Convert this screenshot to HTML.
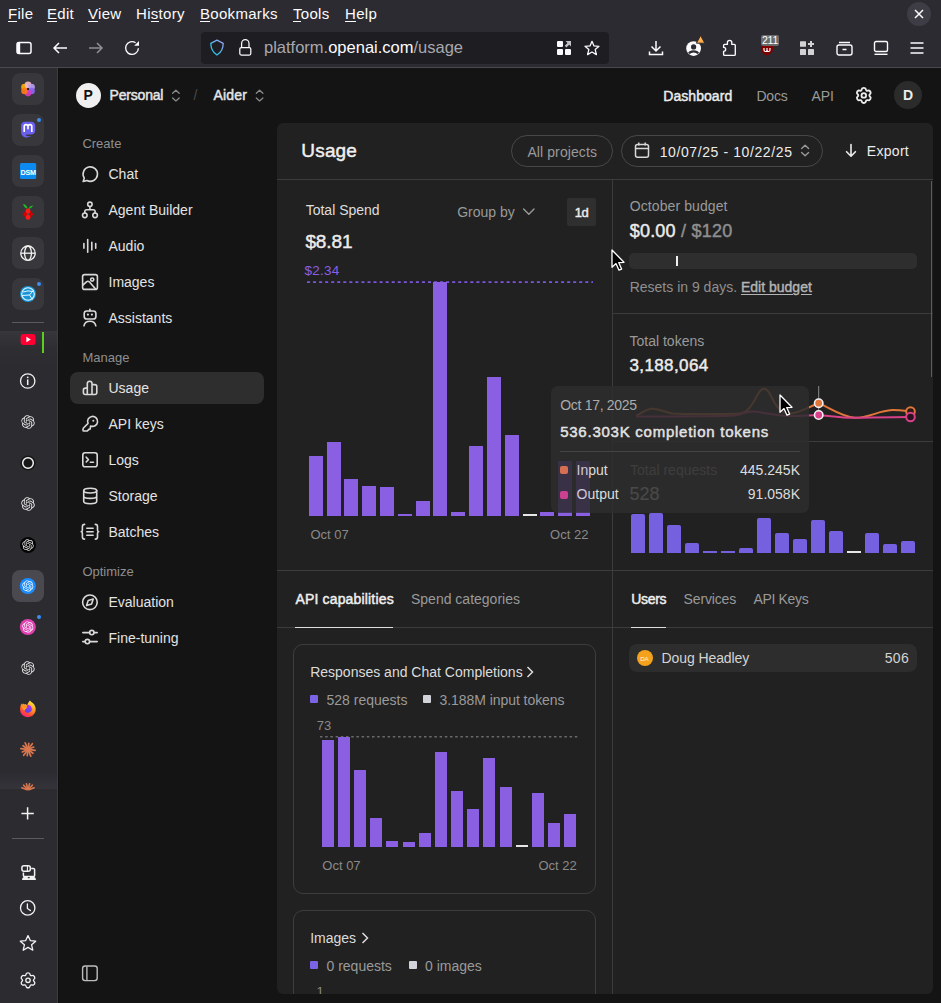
<!DOCTYPE html>
<html><head><meta charset="utf-8">
<style>
*{box-sizing:border-box;margin:0;padding:0}
html,body{width:941px;height:1003px;overflow:hidden;background:#141414;font-family:"Liberation Sans",sans-serif;}
.a{position:absolute;white-space:nowrap}
svg{position:absolute;overflow:visible}
#chrome{position:absolute;left:0;top:0;width:941px;height:68px;background:#2c2b31;}
#menubar span{position:absolute;top:5px;font-size:15px;color:#fbfbfe;letter-spacing:0.3px}
#menubar u{text-decoration:none;box-shadow:inset 0 -1px 0 #fbfbfe;padding-bottom:0px}
#urlbar{position:absolute;left:201px;top:32px;width:408px;height:32px;background:#1e1d22;border-radius:4px}
</style></head><body>
<!-- ============ BROWSER CHROME ============ -->
<div id="chrome">
 <div id="menubar">
  <span style="left:8px"><u>F</u>ile</span>
  <span style="left:47px"><u>E</u>dit</span>
  <span style="left:88px"><u>V</u>iew</span>
  <span style="left:136px">Hi<u>s</u>tory</span>
  <span style="left:200px"><u>B</u>ookmarks</span>
  <span style="left:293px"><u>T</u>ools</span>
  <span style="left:345px"><u>H</u>elp</span>
 </div>
 <div class="a" style="left:907px;top:2px;width:24px;height:24px;border-radius:12px;background:#3e3d45"></div>
 <svg style="left:914px;top:9px" width="10" height="10" viewBox="0 0 10 10"><path d="M1 1L9 9M9 1L1 9" stroke="#fbfbfe" stroke-width="1.5"/></svg>
 <!-- nav icons -->
 <svg style="left:16px;top:40px" width="16" height="16" viewBox="0 0 16 16"><rect x="1" y="2.5" width="14" height="11" rx="2" fill="none" stroke="#fbfbfe" stroke-width="1.5"/><rect x="1" y="2.5" width="3.2" height="11" fill="#fbfbfe"/></svg>
 <svg style="left:52px;top:40px" width="16" height="16" viewBox="0 0 16 16"><path d="M15 8H2M7 3L2 8L7 13" fill="none" stroke="#fbfbfe" stroke-width="1.5"/></svg>
 <svg style="left:88px;top:40px" width="16" height="16" viewBox="0 0 16 16"><path d="M1 8H14M9 3L14 8L9 13" fill="none" stroke="#8f8f94" stroke-width="1.5"/></svg>
 <svg style="left:124px;top:40px" width="16" height="16" viewBox="0 0 16 16"><path d="M14.4 8.2A6.4 6.4 0 1 1 11.6 2.7" fill="none" stroke="#fbfbfe" stroke-width="1.35"/><path d="M15 1V5.8H10.2Z" fill="#fbfbfe"/></svg>
 <div id="urlbar"></div>
 <svg style="left:209px;top:39px" width="16" height="17" viewBox="0 0 16 17"><defs><linearGradient id="sg" x1="1" y1="0" x2="0.2" y2="0.8"><stop offset="0" stop-color="#a99cf5"/><stop offset="0.55" stop-color="#5fb6f0"/><stop offset="1" stop-color="#2ac3ee"/></linearGradient></defs><path d="M8 1.2L14.2 4.3C14.2 9.8 12 13.6 8 16C4 13.6 1.8 9.8 1.8 4.3Z" fill="none" stroke="url(#sg)" stroke-width="1.3" stroke-linejoin="round"/></svg>
 <svg style="left:237px;top:39px" width="16" height="17" viewBox="0 0 16 17"><rect x="2.8" y="8.6" width="11" height="7.4" rx="1.5" fill="none" stroke="#fbfbfe" stroke-width="1.25"/><path d="M4.6 8.6V4.4A3.7 3.7 0 0 1 12 4.4V8.6" fill="none" stroke="#fbfbfe" stroke-width="1.25"/></svg>
 <div class="a" style="left:264px;top:38px;font-size:16.5px;color:#a8a8ad">platform.<span style="color:#fbfbfe">openai.com</span>/usage</div>
 <svg style="left:556px;top:40px" width="16" height="16" viewBox="0 0 16 16"><rect x="1" y="1" width="6" height="6" rx="1" fill="#fbfbfe"/><rect x="1" y="9" width="6" height="6" rx="1" fill="#fbfbfe"/><rect x="9" y="9" width="6" height="6" rx="1" fill="#fbfbfe"/><path d="M15 1V6.4L9.6 1Z" fill="#c4c4c6"/><path d="M9.6 6.6L12.6 3.6" stroke="#c4c4c6" stroke-width="2.2"/></svg>
 <svg style="left:584px;top:40px" width="16" height="16" viewBox="0 0 16 16"><path d="M8 1.3L10 5.9L15 6.3L11.2 9.6L12.4 14.6L8 12L3.6 14.6L4.8 9.6L1 6.3L6 5.9Z" fill="none" stroke="#fbfbfe" stroke-width="1.3" stroke-linejoin="round"/></svg>
 <svg style="left:648px;top:40px" width="16" height="16" viewBox="0 0 16 16"><path d="M8 1V11M3.5 6.5L8 11L12.5 6.5M1.5 11.5V14.5H14.5V11.5" fill="none" stroke="#fbfbfe" stroke-width="1.5"/></svg>
 <svg style="left:685px;top:40px" width="18" height="16" viewBox="0 0 18 16"><circle cx="8.6" cy="8.6" r="7.4" fill="#fbfbfe"/><circle cx="8.6" cy="6.9" r="2.6" fill="#2c2b31"/><path d="M4 13.4C5.5 10.6 11.7 10.6 13.2 13.4" fill="none" stroke="#2c2b31" stroke-width="2.2"/><path d="M15.6 -4.6L19.8 3.2H11.4Z" fill="#ffb04a" stroke="#2c2b31" stroke-width="1"/></svg>
 <svg style="left:721px;top:40px" width="16" height="16" viewBox="0 0 16 16"><path d="M2.6 5.4Q2.6 4.4 3.6 4.4H6.4V2.5A2.2 2.2 0 0 1 10.8 2.5V4.4H13.3Q14.3 4.4 14.3 5.4V14.4Q14.3 15.4 13.3 15.4H3.6Q2.6 15.4 2.6 14.4V11.3A2.1 1.95 0 0 0 2.6 7.4Z" fill="none" stroke="#fbfbfe" stroke-width="1.35" stroke-linejoin="round"/></svg>
 <svg style="left:759px;top:40px" width="16" height="16" viewBox="0 0 16 16"><path d="M8 1L14 3V9C14 12 11 14.5 8 15.5C5 14.5 2 12 2 9V3Z" fill="#800000"/><path d="M5 8V10A1.5 1.5 0 0 0 8 10V8M8 10A1.5 1.5 0 0 0 11 10V8" fill="none" stroke="#fff" stroke-width="1.2"/></svg>
 <div class="a" style="left:761px;top:35px;width:18px;height:11px;background:#6b6b6b;border-radius:2px;font-size:10.5px;line-height:11px;color:#fff;text-align:center;letter-spacing:-0.3px">211</div>
 <svg style="left:799px;top:40px" width="16" height="16" viewBox="0 0 16 16"><rect x="1" y="1.2" width="6" height="5.6" rx="0.6" fill="#d2d2d4"/><rect x="1" y="9" width="6" height="6" rx="0.6" fill="#d2d2d4"/><rect x="9" y="9" width="6" height="6" rx="0.6" fill="#d2d2d4"/><path d="M12 1V7M9 4H15" stroke="#d2d2d4" stroke-width="2"/></svg>
 <svg style="left:836px;top:40px" width="17" height="16" viewBox="0 0 17 16"><rect x="1" y="5" width="15" height="10" rx="2" fill="none" stroke="#fbfbfe" stroke-width="1.4"/><path d="M3 2.5H14M6.5 9.5H10.5" stroke="#fbfbfe" stroke-width="1.4"/></svg>
 <svg style="left:873px;top:40px" width="16" height="16" viewBox="0 0 16 16"><rect x="1.5" y="1.5" width="13" height="10" rx="1.5" fill="none" stroke="#fbfbfe" stroke-width="1.4"/><path d="M1.5 14.3H14.5" stroke="#fbfbfe" stroke-width="1.4"/></svg>
 <svg style="left:909px;top:40px" width="16" height="16" viewBox="0 0 16 16"><path d="M1.5 3H14.5M1.5 8H14.5M1.5 13H14.5" stroke="#fbfbfe" stroke-width="1.4"/></svg>
 <div class="a" style="left:0;top:67px;width:941px;height:1px;background:#4a4950"></div>
</div>
<!-- SIDEBAR_PLACEHOLDER -->

<div class="a" style="left:0px;top:68px;width:57px;height:935px;background:#2c2b30;"></div>
<div class="a" style="left:57px;top:68px;width:1px;height:935px;background:#3d3c41;"></div>
<div class="a" style="left:58px;top:68px;width:1px;height:935px;background:#0f0f0f;"></div>
<div class="a" style="left:12px;top:73px;width:32px;height:32px;background:#38373c;border-radius:8px;"></div>
<div class="a" style="left:12px;top:114px;width:32px;height:32px;background:#38373c;border-radius:8px;"></div>
<div class="a" style="left:12px;top:155px;width:32px;height:32px;background:#38373c;border-radius:8px;"></div>
<div class="a" style="left:12px;top:196px;width:32px;height:32px;background:#38373c;border-radius:8px;"></div>
<div class="a" style="left:12px;top:237px;width:32px;height:32px;background:#38373c;border-radius:8px;"></div>
<div class="a" style="left:12px;top:278px;width:32px;height:32px;background:#38373c;border-radius:8px;"></div>
<div class="a" style="left:12px;top:322px;width:32px;height:1px;background:#5b5a61;"></div>
<div class="a" style="left:0px;top:331px;width:57px;height:458px;background:#2c2b30;background:linear-gradient(#37363b,#2e2d32 18px,#2c2b30 40px,#2c2b30 440px,#35343a 458px);"></div>
<div class="a" style="left:12px;top:570px;width:32px;height:32px;background:#4a4950;border-radius:8px;"></div>
<div class="a" style="left:12px;top:838px;width:32px;height:1px;background:#5b5a61;"></div>
<div class="a" style="left:76px;top:83px;width:25px;height:25px;border-radius:13px;background:#f0f0f0"></div>
<div class="a" style="left:83.5px;top:88.4px;font-size:14px;line-height:14px;color:#111;font-weight:700;">P</div>
<div class="a" style="left:109.6px;top:88.3px;font-size:14px;line-height:14px;color:#e6e6e6;font-weight:400;letter-spacing:-0.2px;-webkit-text-stroke:0.45px #e6e6e6;">Personal</div>
<div class="a" style="left:193.5px;top:88.3px;font-size:14px;line-height:14px;color:#4a4a4a;font-weight:400;">/</div>
<div class="a" style="left:213.6px;top:88.3px;font-size:14px;line-height:14px;color:#e6e6e6;font-weight:400;letter-spacing:0.14px;-webkit-text-stroke:0.45px #e6e6e6;">Aider</div>
<div class="a" style="left:663.3px;top:88.5px;font-size:14px;line-height:14px;color:#ececec;font-weight:400;letter-spacing:0.05px;-webkit-text-stroke:0.45px #ececec;">Dashboard</div>
<div class="a" style="left:756.4px;top:88.5px;font-size:14px;line-height:14px;color:#9a9a9a;font-weight:400;letter-spacing:-0.2px;">Docs</div>
<div class="a" style="left:811.4px;top:88.5px;font-size:14px;line-height:14px;color:#9a9a9a;font-weight:400;">API</div>
<div class="a" style="left:894px;top:81px;width:28px;height:28px;border-radius:14px;background:#2b2b2b"></div>
<div class="a" style="left:903.0px;top:88.4px;font-size:14px;line-height:14px;color:#ececec;font-weight:700;">D</div>
<div class="a" style="left:82.4px;top:136.9px;font-size:13px;line-height:13px;color:#8f8f8f;font-weight:400;">Create</div>
<div class="a" style="left:82.4px;top:351.3px;font-size:13px;line-height:13px;color:#8f8f8f;font-weight:400;">Manage</div>
<div class="a" style="left:82.4px;top:564.6px;font-size:13px;line-height:13px;color:#8f8f8f;font-weight:400;">Optimize</div>
<div class="a" style="left:70px;top:372px;width:194px;height:32px;background:#2e2e2e;border-radius:8px;"></div>
<div class="a" style="left:108.5px;top:167.2px;font-size:14px;line-height:14px;color:#e3e3e3;font-weight:400;">Chat</div>
<div class="a" style="left:108.5px;top:203.3px;font-size:14px;line-height:14px;color:#e3e3e3;font-weight:400;">Agent Builder</div>
<div class="a" style="left:108.5px;top:239.3px;font-size:14px;line-height:14px;color:#e3e3e3;font-weight:400;">Audio</div>
<div class="a" style="left:108.5px;top:275.3px;font-size:14px;line-height:14px;color:#e3e3e3;font-weight:400;">Images</div>
<div class="a" style="left:108.5px;top:311.3px;font-size:14px;line-height:14px;color:#e3e3e3;font-weight:400;">Assistants</div>
<div class="a" style="left:108.5px;top:381.2px;font-size:14px;line-height:14px;color:#e3e3e3;font-weight:400;">Usage</div>
<div class="a" style="left:108.5px;top:417.3px;font-size:14px;line-height:14px;color:#e3e3e3;font-weight:400;">API keys</div>
<div class="a" style="left:108.5px;top:453.3px;font-size:14px;line-height:14px;color:#e3e3e3;font-weight:400;">Logs</div>
<div class="a" style="left:108.5px;top:489.3px;font-size:14px;line-height:14px;color:#e3e3e3;font-weight:400;">Storage</div>
<div class="a" style="left:108.5px;top:525.3px;font-size:14px;line-height:14px;color:#e3e3e3;font-weight:400;">Batches</div>
<div class="a" style="left:108.5px;top:595.4px;font-size:14px;line-height:14px;color:#e3e3e3;font-weight:400;">Evaluation</div>
<div class="a" style="left:108.5px;top:631.4px;font-size:14px;line-height:14px;color:#e3e3e3;font-weight:400;">Fine-tuning</div>
<div class="a" style="left:277px;top:123px;width:656px;height:871px;background:#212121;border-radius:6px;"></div>
<div class="a" style="left:301.3px;top:141.4px;font-size:19px;line-height:19px;color:#f0f0f0;font-weight:400;letter-spacing:0.18px;-webkit-text-stroke:0.45px #f0f0f0;">Usage</div>
<div class="a" style="left:277px;top:179px;width:656px;height:1px;background:#3c3c3c;"></div>
<div class="a" style="left:612px;top:180px;width:1px;height:814px;background:#3c3c3c;"></div>
<div class="a" style="left:511px;top:135px;width:102px;height:32px;border-radius:16px;border:1px solid #474747"></div>
<div class="a" style="left:527.4px;top:144.7px;font-size:14px;line-height:14px;color:#9a9a9a;font-weight:400;letter-spacing:0.1px;">All projects</div>
<div class="a" style="left:621px;top:135px;width:202px;height:32px;border-radius:16px;border:1px solid #474747"></div>
<div class="a" style="left:659.7px;top:144.7px;font-size:14px;line-height:14px;color:#ececec;font-weight:400;letter-spacing:0.6px;">10/07/25 - 10/22/25</div>
<div class="a" style="left:866.8px;top:144.3px;font-size:14px;line-height:14px;color:#ececec;font-weight:400;letter-spacing:0.3px;">Export</div>
<div class="a" style="left:305.7px;top:203.0px;font-size:14px;line-height:14px;color:#dedede;font-weight:400;">Total Spend</div>
<div class="a" style="left:305.4px;top:232.1px;font-size:19px;line-height:19px;color:#ececec;font-weight:400;letter-spacing:-0.1px;-webkit-text-stroke:0.45px #ececec;">$8.81</div>
<div class="a" style="left:304.5px;top:263.5px;font-size:13.5px;line-height:13.5px;color:#8a5fe8;font-weight:400;letter-spacing:0.25px;">$2.34</div>
<div class="a" style="left:457.2px;top:205.2px;font-size:14px;line-height:14px;color:#9a9a9a;font-weight:400;">Group by</div>
<div class="a" style="left:567px;top:198px;width:29px;height:28px;background:#2f2f2f;border-radius:2px;"></div>
<div class="a" style="left:574.8px;top:206.1px;font-size:13px;line-height:13px;color:#ececec;font-weight:400;letter-spacing:-0.6px;-webkit-text-stroke:0.45px #ececec;">1d</div>
<svg style="left:0;top:0" width="941" height="1003"><line x1="307" y1="282.1" x2="593" y2="282.1" stroke="#7c55dd" stroke-width="1.6" stroke-dasharray="3 3.05"/></svg>
<div class="a" style="left:309px;top:456px;width:14px;height:60px;background:#8a5fe2"></div>
<div class="a" style="left:327px;top:442px;width:14px;height:74px;background:#8a5fe2"></div>
<div class="a" style="left:344px;top:479px;width:14px;height:37px;background:#8a5fe2"></div>
<div class="a" style="left:362px;top:486px;width:14px;height:30px;background:#8a5fe2"></div>
<div class="a" style="left:380px;top:487px;width:14px;height:29px;background:#8a5fe2"></div>
<div class="a" style="left:398px;top:514px;width:14px;height:2px;background:#8a5fe2"></div>
<div class="a" style="left:416px;top:501px;width:14px;height:15px;background:#8a5fe2"></div>
<div class="a" style="left:433px;top:282px;width:14px;height:234px;background:#8a5fe2"></div>
<div class="a" style="left:451px;top:512px;width:14px;height:4px;background:#8a5fe2"></div>
<div class="a" style="left:469px;top:446px;width:14px;height:70px;background:#8a5fe2"></div>
<div class="a" style="left:487px;top:377px;width:14px;height:139px;background:#8a5fe2"></div>
<div class="a" style="left:505px;top:435px;width:14px;height:81px;background:#8a5fe2"></div>
<div class="a" style="left:523px;top:514px;width:14px;height:2px;background:#e6e6e6"></div>
<div class="a" style="left:540px;top:512px;width:14px;height:4px;background:#8a5fe2"></div>
<div class="a" style="left:558px;top:512px;width:14px;height:4px;background:#8a5fe2"></div>
<div class="a" style="left:576px;top:512px;width:14px;height:4px;background:#8a5fe2"></div>
<div class="a" style="left:310.4px;top:527.9px;font-size:13px;line-height:13px;color:#8a8a8a;font-weight:400;">Oct 07</div>
<div class="a" style="right:352.6px;top:527.7px;font-size:13px;line-height:13px;color:#8a8a8a;font-weight:400;">Oct 22</div>
<div class="a" style="left:277px;top:570px;width:335px;height:1px;background:#3c3c3c;"></div>
<div class="a" style="left:629.7px;top:198.9px;font-size:14px;line-height:14px;color:#9a9a9a;font-weight:400;letter-spacing:0.1px;">October budget</div>
<div class="a" style="left:629.7px;top:221.8px;font-size:18px;line-height:18px;color:#ececec;font-weight:400;letter-spacing:0.22px;-webkit-text-stroke:0.45px #ececec;">$0.00<span style="color:#8f8f8f;-webkit-text-stroke-color:#8f8f8f"> / $120</span></div>
<div class="a" style="left:629px;top:253px;width:288px;height:16px;background:#2e2e2e;border-radius:5px;"></div>
<div class="a" style="left:676px;top:256px;width:2.2px;height:9.5px;background:#f0f0f0;"></div>
<div class="a" style="left:629.7px;top:280.2px;font-size:14px;line-height:14px;color:#8f8f8f;font-weight:400;">Resets in 9 days. <span style="color:#b5b5b5;-webkit-text-stroke:0.4px #b5b5b5;text-decoration:underline;text-underline-offset:2px">Edit budget</span></div>
<div class="a" style="left:613px;top:313px;width:320px;height:1px;background:#3c3c3c;"></div>
<div class="a" style="left:629.5px;top:333.8px;font-size:14px;line-height:14px;color:#9a9a9a;font-weight:400;">Total tokens</div>
<div class="a" style="left:629.5px;top:356.6px;font-size:17px;line-height:17px;color:#ececec;font-weight:400;letter-spacing:0.38px;-webkit-text-stroke:0.45px #ececec;">3,188,064</div>
<svg style="left:0;top:0" width="941" height="1003">
<path d="M636 415.8 C642 413 646 409 652 408.8 C658 408.6 664 412 672 413.5 C690 414.5 715 414 738 413.8 C748 413.5 752 405 758 394 C762 387 766 387 770 394 C775 405 780 413 790 413.5 C800 413 810 406 818.7 403.2 C830 408 842 417 855 417.8 C868 418 878 411 892 410.1 C900 410 906 411 911 411.5" fill="none" stroke="#e0763a" stroke-width="2"/>
<path d="M636 416.4 C680 416.5 715 416.5 735 415.5 C742 414.5 746 411.5 752 411.5 C760 411.5 770 415 790 416 C800 416 810 415.2 818.7 415 C830 416 842 417.8 855 417.8 C870 417.6 890 417 911 417" fill="none" stroke="#d8408a" stroke-width="2"/>
<line x1="818.7" y1="386" x2="818.7" y2="415" stroke="#8a8a8a" stroke-width="1"/>
<circle cx="818.7" cy="403.2" r="4.2" fill="#e0763a" stroke="#f2f2f2" stroke-width="1.6"/>
<circle cx="818.7" cy="415" r="4.2" fill="#d8408a" stroke="#f2f2f2" stroke-width="1.6"/>
<circle cx="910.5" cy="411.5" r="4.3" fill="#2a1a14" stroke="#e0763a" stroke-width="2"/>
<circle cx="910.5" cy="417" r="4.3" fill="#2a1320" stroke="#d8408a" stroke-width="2"/>
</svg>
<div class="a" style="left:613px;top:441px;width:320px;height:1px;background:#3c3c3c;"></div>
<div class="a" style="left:630.0px;top:462.6px;font-size:14px;line-height:14px;color:#9a9a9a;font-weight:400;">Total requests</div>
<div class="a" style="left:629.6px;top:484.8px;font-size:18px;line-height:18px;color:#ececec;font-weight:400;">528</div>
<div class="a" style="left:631px;top:513.8px;width:14px;height:38.8px;background:#7560e0;border-radius:2px 2px 0 0;"></div>
<div class="a" style="left:649px;top:512.7px;width:14px;height:39.9px;background:#7560e0;border-radius:2px 2px 0 0;"></div>
<div class="a" style="left:667px;top:524.9px;width:14px;height:27.7px;background:#7560e0;border-radius:2px 2px 0 0;"></div>
<div class="a" style="left:685px;top:542.5px;width:14px;height:10.1px;background:#7560e0;border-radius:2px 2px 0 0;"></div>
<div class="a" style="left:703px;top:550.8px;width:14px;height:1.8px;background:#7560e0;"></div>
<div class="a" style="left:721px;top:550.8px;width:14px;height:1.8px;background:#7560e0;"></div>
<div class="a" style="left:739px;top:548.0px;width:14px;height:4.6px;background:#7560e0;border-radius:2px 2px 0 0;"></div>
<div class="a" style="left:757px;top:518.0px;width:14px;height:34.6px;background:#7560e0;border-radius:2px 2px 0 0;"></div>
<div class="a" style="left:775px;top:532.8px;width:14px;height:19.8px;background:#7560e0;border-radius:2px 2px 0 0;"></div>
<div class="a" style="left:793px;top:539.0px;width:14px;height:13.6px;background:#7560e0;border-radius:2px 2px 0 0;"></div>
<div class="a" style="left:811px;top:520.4px;width:14px;height:32.2px;background:#7560e0;border-radius:2px 2px 0 0;"></div>
<div class="a" style="left:829px;top:531.0px;width:14px;height:21.6px;background:#7560e0;border-radius:2px 2px 0 0;"></div>
<div class="a" style="left:847px;top:550.5px;width:14px;height:2.1px;background:#e6e6e6;"></div>
<div class="a" style="left:865px;top:532.8px;width:14px;height:19.8px;background:#7560e0;border-radius:2px 2px 0 0;"></div>
<div class="a" style="left:883px;top:544.0px;width:14px;height:8.6px;background:#7560e0;border-radius:2px 2px 0 0;"></div>
<div class="a" style="left:901px;top:540.8px;width:14px;height:11.8px;background:#7560e0;border-radius:2px 2px 0 0;"></div>
<div class="a" style="left:613px;top:570px;width:320px;height:1px;background:#3c3c3c;"></div>
<div class="a" style="left:295.4px;top:591.8px;font-size:14px;line-height:14px;color:#f0f0f0;font-weight:400;letter-spacing:0.17px;-webkit-text-stroke:0.45px #f0f0f0;">API capabilities</div>
<div class="a" style="left:411.0px;top:591.8px;font-size:14px;line-height:14px;color:#9a9a9a;font-weight:400;">Spend categories</div>
<div class="a" style="left:277px;top:627px;width:335px;height:1px;background:#3c3c3c;"></div>
<div class="a" style="left:295px;top:627px;width:98px;height:1px;background:#dedede;"></div>
<div class="a" style="left:293px;top:644px;width:303px;height:250px;border-radius:10px;border:1px solid #3d3d3d"></div>
<div class="a" style="left:310.2px;top:665.0px;font-size:14px;line-height:14px;color:#dcdcdc;font-weight:400;">Responses and Chat Completions</div>
<svg style="left:526px;top:666px" width="8" height="12" viewBox="0 0 8 12"><path d="M1.5 1L6.5 6L1.5 11" fill="none" stroke="#dcdcdc" stroke-width="1.5"/></svg>
<div class="a" style="left:310px;top:695px;width:8px;height:8px;background:#7b63e6;border-radius:1px;"></div>
<div class="a" style="left:326.5px;top:692.6px;font-size:14px;line-height:14px;color:#9a9a9a;font-weight:400;">528 requests</div>
<div class="a" style="left:423px;top:695px;width:8px;height:8px;background:#d2d2da;border-radius:1px;"></div>
<div class="a" style="left:439.4px;top:692.6px;font-size:14px;line-height:14px;color:#9a9a9a;font-weight:400;letter-spacing:-0.05px;">3.188M input tokens</div>
<div class="a" style="left:316.8px;top:718.7px;font-size:13px;line-height:13px;color:#8a8a8a;font-weight:400;">73</div>
<svg style="left:0;top:0" width="941" height="1003"><line x1="320" y1="736.8" x2="579" y2="736.8" stroke="#6a6a6a" stroke-width="1.4" stroke-dasharray="2.5 2.7"/></svg>
<div class="a" style="left:322px;top:740px;width:12px;height:107px;background:#8a5fe2"></div>
<div class="a" style="left:338px;top:737px;width:12px;height:110px;background:#8a5fe2"></div>
<div class="a" style="left:354px;top:770px;width:12px;height:77px;background:#8a5fe2"></div>
<div class="a" style="left:370px;top:818px;width:12px;height:29px;background:#8a5fe2"></div>
<div class="a" style="left:386px;top:841px;width:12px;height:6px;background:#8a5fe2"></div>
<div class="a" style="left:403px;top:842px;width:12px;height:5px;background:#8a5fe2"></div>
<div class="a" style="left:419px;top:833px;width:12px;height:14px;background:#8a5fe2"></div>
<div class="a" style="left:435px;top:752px;width:12px;height:95px;background:#8a5fe2"></div>
<div class="a" style="left:451px;top:791px;width:12px;height:56px;background:#8a5fe2"></div>
<div class="a" style="left:467px;top:809px;width:12px;height:38px;background:#8a5fe2"></div>
<div class="a" style="left:483px;top:758px;width:12px;height:89px;background:#8a5fe2"></div>
<div class="a" style="left:500px;top:787px;width:12px;height:60px;background:#8a5fe2"></div>
<div class="a" style="left:516px;top:845px;width:12px;height:2px;background:#e6e6e6"></div>
<div class="a" style="left:532px;top:793px;width:12px;height:54px;background:#8a5fe2"></div>
<div class="a" style="left:548px;top:823px;width:12px;height:24px;background:#8a5fe2"></div>
<div class="a" style="left:564px;top:814px;width:12px;height:33px;background:#8a5fe2"></div>
<div class="a" style="left:322.3px;top:858.8px;font-size:13px;line-height:13px;color:#8a8a8a;font-weight:400;">Oct 07</div>
<div class="a" style="right:364.3px;top:858.8px;font-size:13px;line-height:13px;color:#8a8a8a;font-weight:400;">Oct 22</div>
<div class="a" style="left:293px;top:910px;width:303px;height:200px;border-radius:10px;border:1px solid #3d3d3d"></div>
<div class="a" style="left:310.2px;top:931.3px;font-size:14px;line-height:14px;color:#dcdcdc;font-weight:400;">Images</div>
<svg style="left:361px;top:932px" width="8" height="12" viewBox="0 0 8 12"><path d="M1.5 1L6.5 6L1.5 11" fill="none" stroke="#dcdcdc" stroke-width="1.5"/></svg>
<div class="a" style="left:310px;top:961px;width:8px;height:8px;background:#7b63e6;border-radius:1px;"></div>
<div class="a" style="left:326.5px;top:958.6px;font-size:14px;line-height:14px;color:#9a9a9a;font-weight:400;">0 requests</div>
<div class="a" style="left:409px;top:961px;width:8px;height:8px;background:#d2d2da;border-radius:1px;"></div>
<div class="a" style="left:425.0px;top:958.6px;font-size:14px;line-height:14px;color:#9a9a9a;font-weight:400;">0 images</div>
<div class="a" style="left:316.5px;top:985.0px;font-size:13px;line-height:13px;color:#8a8a8a;font-weight:400;">1</div>
<div class="a" style="left:631.3px;top:591.6px;font-size:14px;line-height:14px;color:#f0f0f0;font-weight:400;letter-spacing:-0.32px;-webkit-text-stroke:0.45px #f0f0f0;">Users</div>
<div class="a" style="left:683.6px;top:591.6px;font-size:14px;line-height:14px;color:#9a9a9a;font-weight:400;letter-spacing:-0.15px;">Services</div>
<div class="a" style="left:753.5px;top:591.6px;font-size:14px;line-height:14px;color:#9a9a9a;font-weight:400;letter-spacing:-0.35px;">API Keys</div>
<div class="a" style="left:613px;top:627px;width:320px;height:1px;background:#3c3c3c;"></div>
<div class="a" style="left:631px;top:627px;width:35px;height:1px;background:#dedede;"></div>
<div class="a" style="left:629px;top:644px;width:288px;height:28px;background:#2d2d2d;border-radius:8px;"></div>
<div class="a" style="left:637px;top:650px;width:16px;height:16px;border-radius:8px;background:#f4a21c"></div>
<div class="a" style="left:640.2px;top:655.5px;font-size:6.2px;line-height:6.2px;color:#fff3dc;font-weight:400;letter-spacing:-0.2px;">DA</div>
<div class="a" style="left:661.6px;top:651.3px;font-size:14px;line-height:14px;color:#d4d4d4;font-weight:400;letter-spacing:-0.1px;">Doug Headley</div>
<div class="a" style="right:32.0px;top:651.3px;font-size:14px;line-height:14px;color:#d4d4d4;font-weight:400;letter-spacing:0.3px;">506</div>
<div class="a" style="left:277px;top:994px;width:656px;height:9px;background:#141414;"></div>
<div class="a" style="left:931px;top:181px;width:1.2px;height:196px;background:#5c5c5c;"></div>
<svg style="left:0;top:0" width="941" height="1003"><path d="M83.2 181.5 L84.3 178.1 A7.2 7.2 0 1 1 87 180.5 Z" fill="none" stroke="#d9d9d9" stroke-width="1.6" stroke-linecap="round" stroke-linejoin="round"/><circle cx="89.9" cy="204.3" r="2.2" fill="none" stroke="#d9d9d9" stroke-width="1.6" stroke-linecap="round" stroke-linejoin="round"/><circle cx="84.8" cy="215.3" r="2.3" fill="none" stroke="#d9d9d9" stroke-width="1.6" stroke-linecap="round" stroke-linejoin="round"/><circle cx="95.1" cy="215.3" r="2.3" fill="none" stroke="#d9d9d9" stroke-width="1.6" stroke-linecap="round" stroke-linejoin="round"/><path d="M89.9 206.5V209.6M84.8 213V211.6A1.8 1.8 0 0 1 86.6 209.8H93.3A1.8 1.8 0 0 1 95.1 211.6V213" fill="none" stroke="#d9d9d9" stroke-width="1.6" stroke-linecap="round" stroke-linejoin="round"/><path d="M83.9 243.6V248.2M87.7 239.6V252.3M91.8 242.2V249.9M95.7 243.6V248.2" fill="none" stroke="#d9d9d9" stroke-width="1.6" stroke-linecap="round" stroke-linejoin="round"/><rect x="82.6" y="274.6" width="14.8" height="14.8" rx="2" fill="none" stroke="#d9d9d9" stroke-width="1.6" stroke-linecap="round" stroke-linejoin="round"/><circle cx="92.2" cy="279.6" r="1.6" fill="none" stroke="#d9d9d9" stroke-width="1.6" stroke-linecap="round" stroke-linejoin="round"/><path d="M82.8 285.2L86.5 281.8Q88 280.6 89.5 282L95.6 289" fill="none" stroke="#d9d9d9" stroke-width="1.6" stroke-linecap="round" stroke-linejoin="round"/><rect x="84.2" y="311" width="11.7" height="8" rx="2.6" fill="none" stroke="#d9d9d9" stroke-width="1.6" stroke-linecap="round" stroke-linejoin="round"/><path d="M89.9 309.3V311" fill="none" stroke="#d9d9d9" stroke-width="1.6" stroke-linecap="round" stroke-linejoin="round"/><circle cx="87.9" cy="314.6" r="1.1" fill="#d9d9d9"/><circle cx="91.9" cy="314.6" r="1.1" fill="#d9d9d9"/><path d="M84 325.8Q84.8 321.3 89.9 321.3Q95 321.3 95.8 325.8" fill="none" stroke="#d9d9d9" stroke-width="1.6" stroke-linecap="round" stroke-linejoin="round"/><path d="M87.3 394.5H85.4Q83.4 394.5 83.4 392.5V390.1Q83.4 388.1 85.4 388.1H87.3M87.3 394.5V383.6A2.35 2.35 0 0 1 92 383.6V394.5ZM92 384.6H94.8Q96.8 384.6 96.8 386.6V392.5Q96.8 394.5 94.8 394.5H92" fill="none" stroke="#d9d9d9" stroke-width="1.6" stroke-linecap="round" stroke-linejoin="round"/><path d="M88.03 423.42L83.7 427.7Q83 428.4 83 429.3V430.3Q83 431 83.8 431H86.6Q87.3 431 87.8 430.4L88.6 429.4H89.4Q89.9 429.4 90.2 428.9L90.58 425.97A5 5 0 1 0 88.03 423.42Z" fill="none" stroke="#d9d9d9" stroke-width="1.6" stroke-linecap="round" stroke-linejoin="round"/><circle cx="93.3" cy="420.7" r="1" fill="#d9d9d9"/><rect x="82.8" y="452.8" width="14.4" height="14" rx="2.3" fill="none" stroke="#d9d9d9" stroke-width="1.6" stroke-linecap="round" stroke-linejoin="round"/><path d="M86.2 457.2L88.4 459.6L86.2 462M90.3 462.2H93.5" fill="none" stroke="#d9d9d9" stroke-width="1.6" stroke-linecap="round" stroke-linejoin="round"/><ellipse cx="90.2" cy="490.6" rx="6.5" ry="2.4" fill="none" stroke="#d9d9d9" stroke-width="1.6" stroke-linecap="round" stroke-linejoin="round"/><path d="M83.7 490.6V501.2Q83.7 503.7 90.2 503.7Q96.7 503.7 96.7 501.2V490.6M83.7 496.2Q83.7 498.4 90.2 498.4Q96.7 498.4 96.7 496.2" fill="none" stroke="#d9d9d9" stroke-width="1.6" stroke-linecap="round" stroke-linejoin="round"/><path d="M84.6 524.4Q82.4 524.4 82.4 526.5V529.6Q82.4 531.7 81.2 531.7Q82.4 531.7 82.4 533.8V537Q82.4 539.1 84.6 539.1M95.3 524.4Q97.5 524.4 97.5 526.5V529.6Q97.5 531.7 98.7 531.7Q97.5 531.7 97.5 533.8V537Q97.5 539.1 95.3 539.1M86.8 528.2H93.1M86.8 531.7H93.1M86.8 535.2H93.1" fill="none" stroke="#d9d9d9" stroke-width="1.6" stroke-linecap="round" stroke-linejoin="round"/><circle cx="89.9" cy="602.3" r="7.3" fill="none" stroke="#d9d9d9" stroke-width="1.6" stroke-linecap="round" stroke-linejoin="round"/><path d="M93.2 599L91.6 604L86.6 605.6L88.2 600.6Z" fill="none" stroke="#d9d9d9" stroke-width="1.6" stroke-linecap="round" stroke-linejoin="round"/><path d="M82.8 632.6H89.6M94 632.6H97.2M82.8 641.6H85.2M89.6 641.6H97.2" fill="none" stroke="#d9d9d9" stroke-width="1.6" stroke-linecap="round" stroke-linejoin="round"/><circle cx="91.8" cy="632.6" r="2.2" fill="none" stroke="#d9d9d9" stroke-width="1.6" stroke-linecap="round" stroke-linejoin="round"/><circle cx="87.4" cy="641.6" r="2.2" fill="none" stroke="#d9d9d9" stroke-width="1.6" stroke-linecap="round" stroke-linejoin="round"/><rect x="82.6" y="966" width="14.6" height="14.6" rx="2.5" fill="none" stroke="#bdbdbd" stroke-width="1.4"/><path d="M86.9 966.5V980.2" stroke="#bdbdbd" stroke-width="1.4"/><path d="M172.6 93.3L175.9 90.3L179.2 93.3M172.6 97.9L175.9 100.9L179.2 97.9" fill="none" stroke="#8a8a8a" stroke-width="1.3" stroke-linecap="round" stroke-linejoin="round"/><path d="M256.3 93.3L259.6 90.3L262.9 93.3M256.3 97.9L259.6 100.9L262.9 97.9" fill="none" stroke="#8a8a8a" stroke-width="1.3" stroke-linecap="round" stroke-linejoin="round"/><g transform="translate(863.8 95.4)"><path d="M-1.39 -7.17 C-0.70 -7.57 0.70 -7.57 1.39 -7.17 C2.08 -6.77 2.06 -5.16 2.75 -4.76 C3.44 -4.37 4.82 -5.19 5.51 -4.79 C6.20 -4.39 6.90 -3.17 6.90 -2.38 C6.90 -1.58 5.50 -0.79 5.50 0.00 C5.50 0.79 6.90 1.58 6.90 2.38 C6.90 3.17 6.20 4.39 5.51 4.79 C4.82 5.19 3.44 4.37 2.75 4.76 C2.06 5.16 2.08 6.77 1.39 7.17 C0.70 7.57 -0.70 7.57 -1.39 7.17 C-2.08 6.77 -2.06 5.16 -2.75 4.76 C-3.44 4.37 -4.82 5.19 -5.51 4.79 C-6.20 4.39 -6.90 3.17 -6.90 2.38 C-6.90 1.58 -5.50 0.79 -5.50 0.00 C-5.50 -0.79 -6.90 -1.58 -6.90 -2.38 C-6.90 -3.17 -6.20 -4.39 -5.51 -4.79 C-4.82 -5.19 -3.44 -4.37 -2.75 -4.76 C-2.06 -5.16 -2.08 -6.77 -1.39 -7.17Z" fill="none" stroke="#ececec" stroke-width="1.8" stroke-linejoin="round"/><circle cx="0" cy="0" r="2.3" fill="none" stroke="#ececec" stroke-width="1.8"/></g><rect x="635.5" y="144.5" width="13" height="12.8" rx="2" fill="none" stroke="#d8d8d8" stroke-width="1.5"/><path d="M635.5 148.6H648.5M638.8 142.6V145.6M645.2 142.6V145.6" fill="none" stroke="#d8d8d8" stroke-width="1.5"/><path d="M801.6 148.4L805.1 145.2L808.6 148.4M801.6 152.6L805.1 155.8L808.6 152.6" fill="none" stroke="#9a9a9a" stroke-width="1.4" stroke-linecap="round" stroke-linejoin="round"/><path d="M851 144.6V156M846.6 151.7L851 156.2L855.4 151.7" fill="none" stroke="#ececec" stroke-width="1.6" stroke-linecap="round" stroke-linejoin="round"/><path d="M523.6 209L528.8 214.2L534 209" fill="none" stroke="#9a9a9a" stroke-width="1.4" stroke-linecap="round" stroke-linejoin="round"/><circle cx="24.45" cy="86.95" r="3.3" fill="#f9b000" opacity="0.92"/><circle cx="28.00" cy="84.90" r="3.3" fill="#f2b8c6" opacity="0.92"/><circle cx="31.55" cy="86.95" r="3.3" fill="#b79cf2" opacity="0.92"/><circle cx="31.55" cy="91.05" r="3.3" fill="#8f63f0" opacity="0.92"/><circle cx="28.00" cy="93.10" r="3.3" fill="#d43fc0" opacity="0.92"/><circle cx="24.45" cy="91.05" r="3.3" fill="#ff7a1a" opacity="0.92"/><circle cx="28" cy="89" r="1" fill="#111"/><path d="M21 126Q21 122 25 121.8H31.2Q35.2 122 35.2 126V130.5Q35.2 134 31.5 134.5H27Q25.5 134.5 25.8 135.6Q27.5 136.4 31.5 136Q28 138 24.5 137.2Q21 136 21 131Z" fill="#6b5ff0"/><path d="M24.2 132V126.3Q24.2 124.6 25.9 124.6Q28 124.6 28 126.3V129.2M28 129.2V126.3Q28 124.6 29.9 124.6Q31.8 124.6 31.8 126.3V132" fill="none" stroke="#fff" stroke-width="1.6"/><circle cx="39" cy="120" r="2" fill="#3a8ef6"/><rect x="20" y="163" width="16.2" height="16" rx="1.5" fill="#0d8af0"/><text x="28.1" y="174.6" font-family="Liberation Sans" font-size="7.2" font-weight="700" fill="#fff" text-anchor="middle" letter-spacing="-0.2">DSM</text><path d="M23 204.2Q26 203.6 27.8 208.6Q24.5 208.4 23 204.2ZM33 205.6Q30.5 205.3 28.2 208.7Q31.8 208.8 33 205.6Z" fill="#1dbd1d"/><path d="M28 208.6L33.6 214.2L28 219.8L22.4 214.2Z" fill="#d40000"/><circle cx="28" cy="211" r="2.4" fill="#ff1a1a"/><circle cx="28" cy="217.4" r="2.4" fill="#ff1a1a"/><rect x="27" y="213.3" width="2" height="2" fill="#555"/><circle cx="28" cy="253.2" r="7.2" fill="none" stroke="#f2f2f2" stroke-width="1.3"/><ellipse cx="28" cy="253.2" rx="3.4" ry="7.2" fill="none" stroke="#f2f2f2" stroke-width="1.3"/><path d="M20.8 253.2H35.2" stroke="#f2f2f2" stroke-width="1.3"/><circle cx="28" cy="294" r="8" fill="#1795d8"/><circle cx="28" cy="294" r="6.3" fill="none" stroke="#e8f6ff" stroke-width="1.1"/><path d="M22 295.5L29.5 295L33.2 290.6M29.5 295L32.5 299.5M23 292Q28 290 33 291.5" fill="none" stroke="#e8f6ff" stroke-width="1"/><circle cx="39" cy="284" r="2" fill="#3a8ef6"/><rect x="20.6" y="334" width="15" height="11" rx="3" fill="#ff0033"/><path d="M26.4 336.8V342.2L30.8 339.5Z" fill="#fff"/><rect x="42" y="332" width="2" height="21" fill="#5ad01e"/><circle cx="27.7" cy="381" r="7.2" fill="none" stroke="#f2f2f2" stroke-width="1.3"/><path d="M27.7 379.4V385" stroke="#f2f2f2" stroke-width="1.5"/><circle cx="27.7" cy="377.3" r="0.9" fill="#f2f2f2"/><path d="M22.2819 9.8211a5.9847 5.9847 0 0 0-.5157-4.9108 6.0462 6.0462 0 0 0-6.5098-2.9A6.0651 6.0651 0 0 0 4.9807 4.1818a5.9847 5.9847 0 0 0-3.9977 2.9 6.0462 6.0462 0 0 0 .7427 7.0966 5.98 5.98 0 0 0 .511 4.9107 6.051 6.051 0 0 0 6.5146 2.9001A5.9847 5.9847 0 0 0 13.2599 24a6.0557 6.0557 0 0 0 5.7718-4.2058 5.9894 5.9894 0 0 0 3.9977-2.9001 6.0557 6.0557 0 0 0-.7475-7.0729zm-9.022 12.6081a4.4755 4.4755 0 0 1-2.8764-1.0408l.1419-.0804 4.7783-2.7582a.7948.7948 0 0 0 .3927-.6813v-6.7369l2.02 1.1686a.071.071 0 0 1 .038.052v5.5826a4.504 4.504 0 0 1-4.4945 4.4944zm-9.6607-4.1254a4.4708 4.4708 0 0 1-.5346-3.0137l.142.0852 4.783 2.7582a.7712.7712 0 0 0 .7806 0l5.8428-3.3685v2.3324a.0804.0804 0 0 1-.0332.0615L9.74 19.9502a4.4992 4.4992 0 0 1-6.1408-1.6464zM2.3408 7.8956a4.485 4.485 0 0 1 2.3655-1.9728V11.6a.7664.7664 0 0 0 .3879.6765l5.8144 3.3543-2.0201 1.1685a.0757.0757 0 0 1-.071 0l-4.8303-2.7865A4.504 4.504 0 0 1 2.3408 7.872zm16.5963 3.8558L13.1038 8.364 15.1192 7.2a.0757.0757 0 0 1 .071 0l4.8303 2.7913a4.4944 4.4944 0 0 1-.6765 8.1042v-5.6772a.79.79 0 0 0-.407-.667zm2.0107-3.0231l-.142-.0852-4.7735-2.7818a.7759.7759 0 0 0-.7854 0L9.409 9.2297V6.8974a.0662.0662 0 0 1 .0284-.0615l4.8303-2.7866a4.4992 4.4992 0 0 1 6.6802 4.66zM8.3065 12.863l-2.02-1.1638a.0804.0804 0 0 1-.038-.0567V6.0742a4.4992 4.4992 0 0 1 7.3757-3.4537l-.142.0805L8.704 5.459a.7948.7948 0 0 0-.3927.6813zm1.0976-2.3654l2.602-1.4998 2.6069 1.4998v2.9994l-2.5974 1.4997-2.6067-1.4997Z" fill="#e6e6e6" transform="translate(21.20 415.20) scale(0.5667)"/><circle cx="28" cy="463" r="7.6" fill="#161616"/><circle cx="28" cy="463" r="5.3" fill="none" stroke="#f2f2f2" stroke-width="1.5"/><path d="M22.2819 9.8211a5.9847 5.9847 0 0 0-.5157-4.9108 6.0462 6.0462 0 0 0-6.5098-2.9A6.0651 6.0651 0 0 0 4.9807 4.1818a5.9847 5.9847 0 0 0-3.9977 2.9 6.0462 6.0462 0 0 0 .7427 7.0966 5.98 5.98 0 0 0 .511 4.9107 6.051 6.051 0 0 0 6.5146 2.9001A5.9847 5.9847 0 0 0 13.2599 24a6.0557 6.0557 0 0 0 5.7718-4.2058 5.9894 5.9894 0 0 0 3.9977-2.9001 6.0557 6.0557 0 0 0-.7475-7.0729zm-9.022 12.6081a4.4755 4.4755 0 0 1-2.8764-1.0408l.1419-.0804 4.7783-2.7582a.7948.7948 0 0 0 .3927-.6813v-6.7369l2.02 1.1686a.071.071 0 0 1 .038.052v5.5826a4.504 4.504 0 0 1-4.4945 4.4944zm-9.6607-4.1254a4.4708 4.4708 0 0 1-.5346-3.0137l.142.0852 4.783 2.7582a.7712.7712 0 0 0 .7806 0l5.8428-3.3685v2.3324a.0804.0804 0 0 1-.0332.0615L9.74 19.9502a4.4992 4.4992 0 0 1-6.1408-1.6464zM2.3408 7.8956a4.485 4.485 0 0 1 2.3655-1.9728V11.6a.7664.7664 0 0 0 .3879.6765l5.8144 3.3543-2.0201 1.1685a.0757.0757 0 0 1-.071 0l-4.8303-2.7865A4.504 4.504 0 0 1 2.3408 7.872zm16.5963 3.8558L13.1038 8.364 15.1192 7.2a.0757.0757 0 0 1 .071 0l4.8303 2.7913a4.4944 4.4944 0 0 1-.6765 8.1042v-5.6772a.79.79 0 0 0-.407-.667zm2.0107-3.0231l-.142-.0852-4.7735-2.7818a.7759.7759 0 0 0-.7854 0L9.409 9.2297V6.8974a.0662.0662 0 0 1 .0284-.0615l4.8303-2.7866a4.4992 4.4992 0 0 1 6.6802 4.66zM8.3065 12.863l-2.02-1.1638a.0804.0804 0 0 1-.038-.0567V6.0742a4.4992 4.4992 0 0 1 7.3757-3.4537l-.142.0805L8.704 5.459a.7948.7948 0 0 0-.3927.6813zm1.0976-2.3654l2.602-1.4998 2.6069 1.4998v2.9994l-2.5974 1.4997-2.6067-1.4997Z" fill="#e6e6e6" transform="translate(21.20 497.20) scale(0.5667)"/><circle cx="28" cy="545" r="8" fill="#050505"/><path d="M22.2819 9.8211a5.9847 5.9847 0 0 0-.5157-4.9108 6.0462 6.0462 0 0 0-6.5098-2.9A6.0651 6.0651 0 0 0 4.9807 4.1818a5.9847 5.9847 0 0 0-3.9977 2.9 6.0462 6.0462 0 0 0 .7427 7.0966 5.98 5.98 0 0 0 .511 4.9107 6.051 6.051 0 0 0 6.5146 2.9001A5.9847 5.9847 0 0 0 13.2599 24a6.0557 6.0557 0 0 0 5.7718-4.2058 5.9894 5.9894 0 0 0 3.9977-2.9001 6.0557 6.0557 0 0 0-.7475-7.0729zm-9.022 12.6081a4.4755 4.4755 0 0 1-2.8764-1.0408l.1419-.0804 4.7783-2.7582a.7948.7948 0 0 0 .3927-.6813v-6.7369l2.02 1.1686a.071.071 0 0 1 .038.052v5.5826a4.504 4.504 0 0 1-4.4945 4.4944zm-9.6607-4.1254a4.4708 4.4708 0 0 1-.5346-3.0137l.142.0852 4.783 2.7582a.7712.7712 0 0 0 .7806 0l5.8428-3.3685v2.3324a.0804.0804 0 0 1-.0332.0615L9.74 19.9502a4.4992 4.4992 0 0 1-6.1408-1.6464zM2.3408 7.8956a4.485 4.485 0 0 1 2.3655-1.9728V11.6a.7664.7664 0 0 0 .3879.6765l5.8144 3.3543-2.0201 1.1685a.0757.0757 0 0 1-.071 0l-4.8303-2.7865A4.504 4.504 0 0 1 2.3408 7.872zm16.5963 3.8558L13.1038 8.364 15.1192 7.2a.0757.0757 0 0 1 .071 0l4.8303 2.7913a4.4944 4.4944 0 0 1-.6765 8.1042v-5.6772a.79.79 0 0 0-.407-.667zm2.0107-3.0231l-.142-.0852-4.7735-2.7818a.7759.7759 0 0 0-.7854 0L9.409 9.2297V6.8974a.0662.0662 0 0 1 .0284-.0615l4.8303-2.7866a4.4992 4.4992 0 0 1 6.6802 4.66zM8.3065 12.863l-2.02-1.1638a.0804.0804 0 0 1-.038-.0567V6.0742a4.4992 4.4992 0 0 1 7.3757-3.4537l-.142.0805L8.704 5.459a.7948.7948 0 0 0-.3927.6813zm1.0976-2.3654l2.602-1.4998 2.6069 1.4998v2.9994l-2.5974 1.4997-2.6067-1.4997Z" fill="#e6e6e6" transform="translate(22.20 539.20) scale(0.4833)"/><circle cx="27.8" cy="586" r="8" fill="#1a8cff"/><path d="M22.2819 9.8211a5.9847 5.9847 0 0 0-.5157-4.9108 6.0462 6.0462 0 0 0-6.5098-2.9A6.0651 6.0651 0 0 0 4.9807 4.1818a5.9847 5.9847 0 0 0-3.9977 2.9 6.0462 6.0462 0 0 0 .7427 7.0966 5.98 5.98 0 0 0 .511 4.9107 6.051 6.051 0 0 0 6.5146 2.9001A5.9847 5.9847 0 0 0 13.2599 24a6.0557 6.0557 0 0 0 5.7718-4.2058 5.9894 5.9894 0 0 0 3.9977-2.9001 6.0557 6.0557 0 0 0-.7475-7.0729zm-9.022 12.6081a4.4755 4.4755 0 0 1-2.8764-1.0408l.1419-.0804 4.7783-2.7582a.7948.7948 0 0 0 .3927-.6813v-6.7369l2.02 1.1686a.071.071 0 0 1 .038.052v5.5826a4.504 4.504 0 0 1-4.4945 4.4944zm-9.6607-4.1254a4.4708 4.4708 0 0 1-.5346-3.0137l.142.0852 4.783 2.7582a.7712.7712 0 0 0 .7806 0l5.8428-3.3685v2.3324a.0804.0804 0 0 1-.0332.0615L9.74 19.9502a4.4992 4.4992 0 0 1-6.1408-1.6464zM2.3408 7.8956a4.485 4.485 0 0 1 2.3655-1.9728V11.6a.7664.7664 0 0 0 .3879.6765l5.8144 3.3543-2.0201 1.1685a.0757.0757 0 0 1-.071 0l-4.8303-2.7865A4.504 4.504 0 0 1 2.3408 7.872zm16.5963 3.8558L13.1038 8.364 15.1192 7.2a.0757.0757 0 0 1 .071 0l4.8303 2.7913a4.4944 4.4944 0 0 1-.6765 8.1042v-5.6772a.79.79 0 0 0-.407-.667zm2.0107-3.0231l-.142-.0852-4.7735-2.7818a.7759.7759 0 0 0-.7854 0L9.409 9.2297V6.8974a.0662.0662 0 0 1 .0284-.0615l4.8303-2.7866a4.4992 4.4992 0 0 1 6.6802 4.66zM8.3065 12.863l-2.02-1.1638a.0804.0804 0 0 1-.038-.0567V6.0742a4.4992 4.4992 0 0 1 7.3757-3.4537l-.142.0805L8.704 5.459a.7948.7948 0 0 0-.3927.6813zm1.0976-2.3654l2.602-1.4998 2.6069 1.4998v2.9994l-2.5974 1.4997-2.6067-1.4997Z" fill="#ffffff" transform="translate(22.20 580.40) scale(0.4667)"/><circle cx="27.8" cy="627" r="8" fill="#e040b0"/><path d="M22.2819 9.8211a5.9847 5.9847 0 0 0-.5157-4.9108 6.0462 6.0462 0 0 0-6.5098-2.9A6.0651 6.0651 0 0 0 4.9807 4.1818a5.9847 5.9847 0 0 0-3.9977 2.9 6.0462 6.0462 0 0 0 .7427 7.0966 5.98 5.98 0 0 0 .511 4.9107 6.051 6.051 0 0 0 6.5146 2.9001A5.9847 5.9847 0 0 0 13.2599 24a6.0557 6.0557 0 0 0 5.7718-4.2058 5.9894 5.9894 0 0 0 3.9977-2.9001 6.0557 6.0557 0 0 0-.7475-7.0729zm-9.022 12.6081a4.4755 4.4755 0 0 1-2.8764-1.0408l.1419-.0804 4.7783-2.7582a.7948.7948 0 0 0 .3927-.6813v-6.7369l2.02 1.1686a.071.071 0 0 1 .038.052v5.5826a4.504 4.504 0 0 1-4.4945 4.4944zm-9.6607-4.1254a4.4708 4.4708 0 0 1-.5346-3.0137l.142.0852 4.783 2.7582a.7712.7712 0 0 0 .7806 0l5.8428-3.3685v2.3324a.0804.0804 0 0 1-.0332.0615L9.74 19.9502a4.4992 4.4992 0 0 1-6.1408-1.6464zM2.3408 7.8956a4.485 4.485 0 0 1 2.3655-1.9728V11.6a.7664.7664 0 0 0 .3879.6765l5.8144 3.3543-2.0201 1.1685a.0757.0757 0 0 1-.071 0l-4.8303-2.7865A4.504 4.504 0 0 1 2.3408 7.872zm16.5963 3.8558L13.1038 8.364 15.1192 7.2a.0757.0757 0 0 1 .071 0l4.8303 2.7913a4.4944 4.4944 0 0 1-.6765 8.1042v-5.6772a.79.79 0 0 0-.407-.667zm2.0107-3.0231l-.142-.0852-4.7735-2.7818a.7759.7759 0 0 0-.7854 0L9.409 9.2297V6.8974a.0662.0662 0 0 1 .0284-.0615l4.8303-2.7866a4.4992 4.4992 0 0 1 6.6802 4.66zM8.3065 12.863l-2.02-1.1638a.0804.0804 0 0 1-.038-.0567V6.0742a4.4992 4.4992 0 0 1 7.3757-3.4537l-.142.0805L8.704 5.459a.7948.7948 0 0 0-.3927.6813zm1.0976-2.3654l2.602-1.4998 2.6069 1.4998v2.9994l-2.5974 1.4997-2.6067-1.4997Z" fill="#ffffff" transform="translate(22.20 621.40) scale(0.4667)"/><circle cx="39" cy="617" r="2" fill="#3a8ef6"/><path d="M22.2819 9.8211a5.9847 5.9847 0 0 0-.5157-4.9108 6.0462 6.0462 0 0 0-6.5098-2.9A6.0651 6.0651 0 0 0 4.9807 4.1818a5.9847 5.9847 0 0 0-3.9977 2.9 6.0462 6.0462 0 0 0 .7427 7.0966 5.98 5.98 0 0 0 .511 4.9107 6.051 6.051 0 0 0 6.5146 2.9001A5.9847 5.9847 0 0 0 13.2599 24a6.0557 6.0557 0 0 0 5.7718-4.2058 5.9894 5.9894 0 0 0 3.9977-2.9001 6.0557 6.0557 0 0 0-.7475-7.0729zm-9.022 12.6081a4.4755 4.4755 0 0 1-2.8764-1.0408l.1419-.0804 4.7783-2.7582a.7948.7948 0 0 0 .3927-.6813v-6.7369l2.02 1.1686a.071.071 0 0 1 .038.052v5.5826a4.504 4.504 0 0 1-4.4945 4.4944zm-9.6607-4.1254a4.4708 4.4708 0 0 1-.5346-3.0137l.142.0852 4.783 2.7582a.7712.7712 0 0 0 .7806 0l5.8428-3.3685v2.3324a.0804.0804 0 0 1-.0332.0615L9.74 19.9502a4.4992 4.4992 0 0 1-6.1408-1.6464zM2.3408 7.8956a4.485 4.485 0 0 1 2.3655-1.9728V11.6a.7664.7664 0 0 0 .3879.6765l5.8144 3.3543-2.0201 1.1685a.0757.0757 0 0 1-.071 0l-4.8303-2.7865A4.504 4.504 0 0 1 2.3408 7.872zm16.5963 3.8558L13.1038 8.364 15.1192 7.2a.0757.0757 0 0 1 .071 0l4.8303 2.7913a4.4944 4.4944 0 0 1-.6765 8.1042v-5.6772a.79.79 0 0 0-.407-.667zm2.0107-3.0231l-.142-.0852-4.7735-2.7818a.7759.7759 0 0 0-.7854 0L9.409 9.2297V6.8974a.0662.0662 0 0 1 .0284-.0615l4.8303-2.7866a4.4992 4.4992 0 0 1 6.6802 4.66zM8.3065 12.863l-2.02-1.1638a.0804.0804 0 0 1-.038-.0567V6.0742a4.4992 4.4992 0 0 1 7.3757-3.4537l-.142.0805L8.704 5.459a.7948.7948 0 0 0-.3927.6813zm1.0976-2.3654l2.602-1.4998 2.6069 1.4998v2.9994l-2.5974 1.4997-2.6067-1.4997Z" fill="#e6e6e6" transform="translate(21.20 661.20) scale(0.5667)"/><defs><linearGradient id="ffg" x1="0.8" y1="0.1" x2="0.3" y2="1"><stop offset="0" stop-color="#ffe43a"/><stop offset="0.45" stop-color="#ff8a2a"/><stop offset="0.75" stop-color="#ff4a3a"/><stop offset="1" stop-color="#ff1a80"/></linearGradient><linearGradient id="ffp" x1="0.5" y1="0" x2="0.3" y2="1"><stop offset="0" stop-color="#b733f0"/><stop offset="1" stop-color="#4f45e8"/></linearGradient></defs><path d="M29.9 700.6Q31.2 702.2 32.8 703.1A7.9 7.9 0 1 1 20.4 706.5Q20.6 704.6 21.8 703.6L22.6 704.6L23.6 703.6L24.6 704.6L25.6 703.9Q26.4 704.9 27.2 705.2Q28.2 702.5 29.9 700.6Z" fill="url(#ffg)"/><path d="M27.4 705A3.9 3.9 0 1 1 24.4 710.6Q25 708.5 27 707.4Q26.5 706 27.4 705Z" fill="url(#ffp)"/><path d="M21.6 705.6Q24 707.4 27.4 707.5Q25.6 708.6 24.6 710.4Q22.2 709.6 21.6 705.6Z" fill="#ff9d1c"/><path d="M29.19 749.65L35.15 750.38" stroke="#d9774f" stroke-width="1.7" stroke-linecap="round"/><path d="M28.96 750.22L32.95 753.23" stroke="#d9774f" stroke-width="1.7" stroke-linecap="round"/><path d="M28.47 750.60L30.81 756.13" stroke="#d9774f" stroke-width="1.7" stroke-linecap="round"/><path d="M27.85 750.69L27.24 755.65" stroke="#d9774f" stroke-width="1.7" stroke-linecap="round"/><path d="M27.28 750.46L23.67 755.25" stroke="#d9774f" stroke-width="1.7" stroke-linecap="round"/><path d="M26.90 749.97L22.29 751.92" stroke="#d9774f" stroke-width="1.7" stroke-linecap="round"/><path d="M26.81 749.35L20.85 748.62" stroke="#d9774f" stroke-width="1.7" stroke-linecap="round"/><path d="M27.04 748.78L23.05 745.77" stroke="#d9774f" stroke-width="1.7" stroke-linecap="round"/><path d="M27.53 748.40L25.19 742.87" stroke="#d9774f" stroke-width="1.7" stroke-linecap="round"/><path d="M28.15 748.31L28.76 743.35" stroke="#d9774f" stroke-width="1.7" stroke-linecap="round"/><path d="M28.72 748.54L32.33 743.75" stroke="#d9774f" stroke-width="1.7" stroke-linecap="round"/><path d="M29.10 749.03L33.71 747.08" stroke="#d9774f" stroke-width="1.7" stroke-linecap="round"/><circle cx="28" cy="749.5" r="2.6" fill="#d9774f"/><path d="M27.06 789.66L21.89 787.78" stroke="#d9774f" stroke-width="1.6" stroke-linecap="round"/><path d="M27.33 789.26L23.65 785.17" stroke="#d9774f" stroke-width="1.6" stroke-linecap="round"/><path d="M27.76 789.03L26.43 783.69" stroke="#d9774f" stroke-width="1.6" stroke-linecap="round"/><path d="M28.24 789.03L29.57 783.69" stroke="#d9774f" stroke-width="1.6" stroke-linecap="round"/><path d="M28.67 789.26L32.35 785.17" stroke="#d9774f" stroke-width="1.6" stroke-linecap="round"/><path d="M28.94 789.66L34.11 787.78" stroke="#d9774f" stroke-width="1.6" stroke-linecap="round"/><path d="M27.6 807.2V819.6M21.4 813.4H33.8" stroke="#f2f2f2" stroke-width="1.5"/><path d="M31.2 868.4H33.4Q34.6 868.4 34.6 869.6V875.4Q34.6 876.4 33.6 876.4H24.4Q23.4 876.4 23.4 875.4V872.6" fill="none" stroke="#f2f2f2" stroke-width="1.5"/><rect x="21.9" y="865.7" width="8.4" height="5.6" rx="2" fill="#2c2b30" stroke="#f2f2f2" stroke-width="1.5"/><path d="M27.4 866V871" stroke="#f2f2f2" stroke-width="1.1"/><path d="M22 880H36Q36 877.5 34 876.8H24Q22 877.5 22 880Z" fill="#f2f2f2"/><ellipse cx="28.8" cy="877.7" rx="1.1" ry="0.6" fill="#2c2b30"/><circle cx="27.7" cy="907.9" r="7.2" fill="none" stroke="#f2f2f2" stroke-width="1.3"/><path d="M27.4 903.8V908.4L30.4 910.6" fill="none" stroke="#f2f2f2" stroke-width="1.3" stroke-linecap="round"/><path d="M28 935.6L30.3 940.6L35.7 941.2L31.6 944.8L32.8 950.2L28 947.4L23.2 950.2L24.4 944.8L20.3 941.2L25.7 940.6Z" fill="none" stroke="#f2f2f2" stroke-width="1.3" stroke-linejoin="round"/><g transform="translate(28 980.3)"><path d="M-1.37 -7.07 C-0.69 -7.47 0.69 -7.47 1.37 -7.07 C2.05 -6.67 2.02 -5.07 2.70 -4.68 C3.38 -4.29 4.75 -5.11 5.43 -4.72 C6.12 -4.33 6.81 -3.13 6.81 -2.34 C6.80 -1.56 5.40 -0.78 5.40 0.00 C5.40 0.78 6.80 1.56 6.81 2.34 C6.81 3.13 6.12 4.33 5.43 4.72 C4.75 5.11 3.38 4.29 2.70 4.68 C2.02 5.07 2.05 6.67 1.37 7.07 C0.69 7.47 -0.69 7.47 -1.37 7.07 C-2.05 6.67 -2.02 5.07 -2.70 4.68 C-3.38 4.29 -4.75 5.11 -5.43 4.72 C-6.12 4.33 -6.81 3.13 -6.81 2.34 C-6.80 1.56 -5.40 0.78 -5.40 0.00 C-5.40 -0.78 -6.80 -1.56 -6.81 -2.34 C-6.81 -3.13 -6.12 -4.33 -5.43 -4.72 C-4.75 -5.11 -3.38 -4.29 -2.70 -4.68 C-2.02 -5.07 -2.05 -6.67 -1.37 -7.07Z" fill="none" stroke="#f2f2f2" stroke-width="1.3" stroke-linejoin="round"/><circle cx="0" cy="0" r="2.2" fill="none" stroke="#f2f2f2" stroke-width="1.3"/></g></svg>
<div class="a" style="left:551px;top:386px;width:258px;height:127px;border-radius:7px;background:rgba(45,45,45,0.86)"></div>
<div class="a" style="left:560.2px;top:398.2px;font-size:14px;line-height:14px;color:#ababab;font-weight:400;letter-spacing:-0.3px;">Oct 17, 2025</div>
<div class="a" style="left:560.2px;top:424.1px;font-size:15px;line-height:15px;color:#e3e3e3;font-weight:400;letter-spacing:0.75px;-webkit-text-stroke:0.45px #e3e3e3;">536.303K completion tokens</div>
<div class="a" style="left:560px;top:451px;width:240px;height:1px;background:#454545;"></div>
<div class="a" style="left:560px;top:466px;width:8px;height:8px;background:#e5733a;border-radius:2px;"></div>
<div class="a" style="left:576.6px;top:463.4px;font-size:14px;line-height:14px;color:#dcdcdc;font-weight:400;">Input</div>
<div class="a" style="right:141.0px;top:463.4px;font-size:14px;line-height:14px;color:#dcdcdc;font-weight:400;">445.245K</div>
<div class="a" style="left:560px;top:490.5px;width:8px;height:8px;background:#d63c82;border-radius:2px;"></div>
<div class="a" style="left:576.6px;top:487.1px;font-size:14px;line-height:14px;color:#dcdcdc;font-weight:400;">Output</div>
<div class="a" style="right:141.0px;top:487.1px;font-size:14px;line-height:14px;color:#dcdcdc;font-weight:400;">91.058K</div>
<div class="a" style="left:558px;top:461px;width:14px;height:51.5px;background:rgba(138,95,226,0.15);"></div>
<div class="a" style="left:576px;top:461px;width:14px;height:51.5px;background:rgba(138,95,226,0.15);"></div>
<svg style="left:610.3px;top:248px" width="18" height="26" viewBox="-2 -2 18 26"><path d="M0 0L0 17.3L4 13.6L7 20.2L9.6 19.1L6.7 12.6L12 12.3Z" fill="#000" stroke="#fff" stroke-width="1.3" stroke-linejoin="round"/></svg>
<svg style="left:778.2px;top:392.6px" width="18" height="26" viewBox="-2 -2 18 26"><path d="M0 0L0 17.3L4 13.6L7 20.2L9.6 19.1L6.7 12.6L12 12.3Z" fill="#000" stroke="#fff" stroke-width="1.3" stroke-linejoin="round"/></svg>

</body></html>
